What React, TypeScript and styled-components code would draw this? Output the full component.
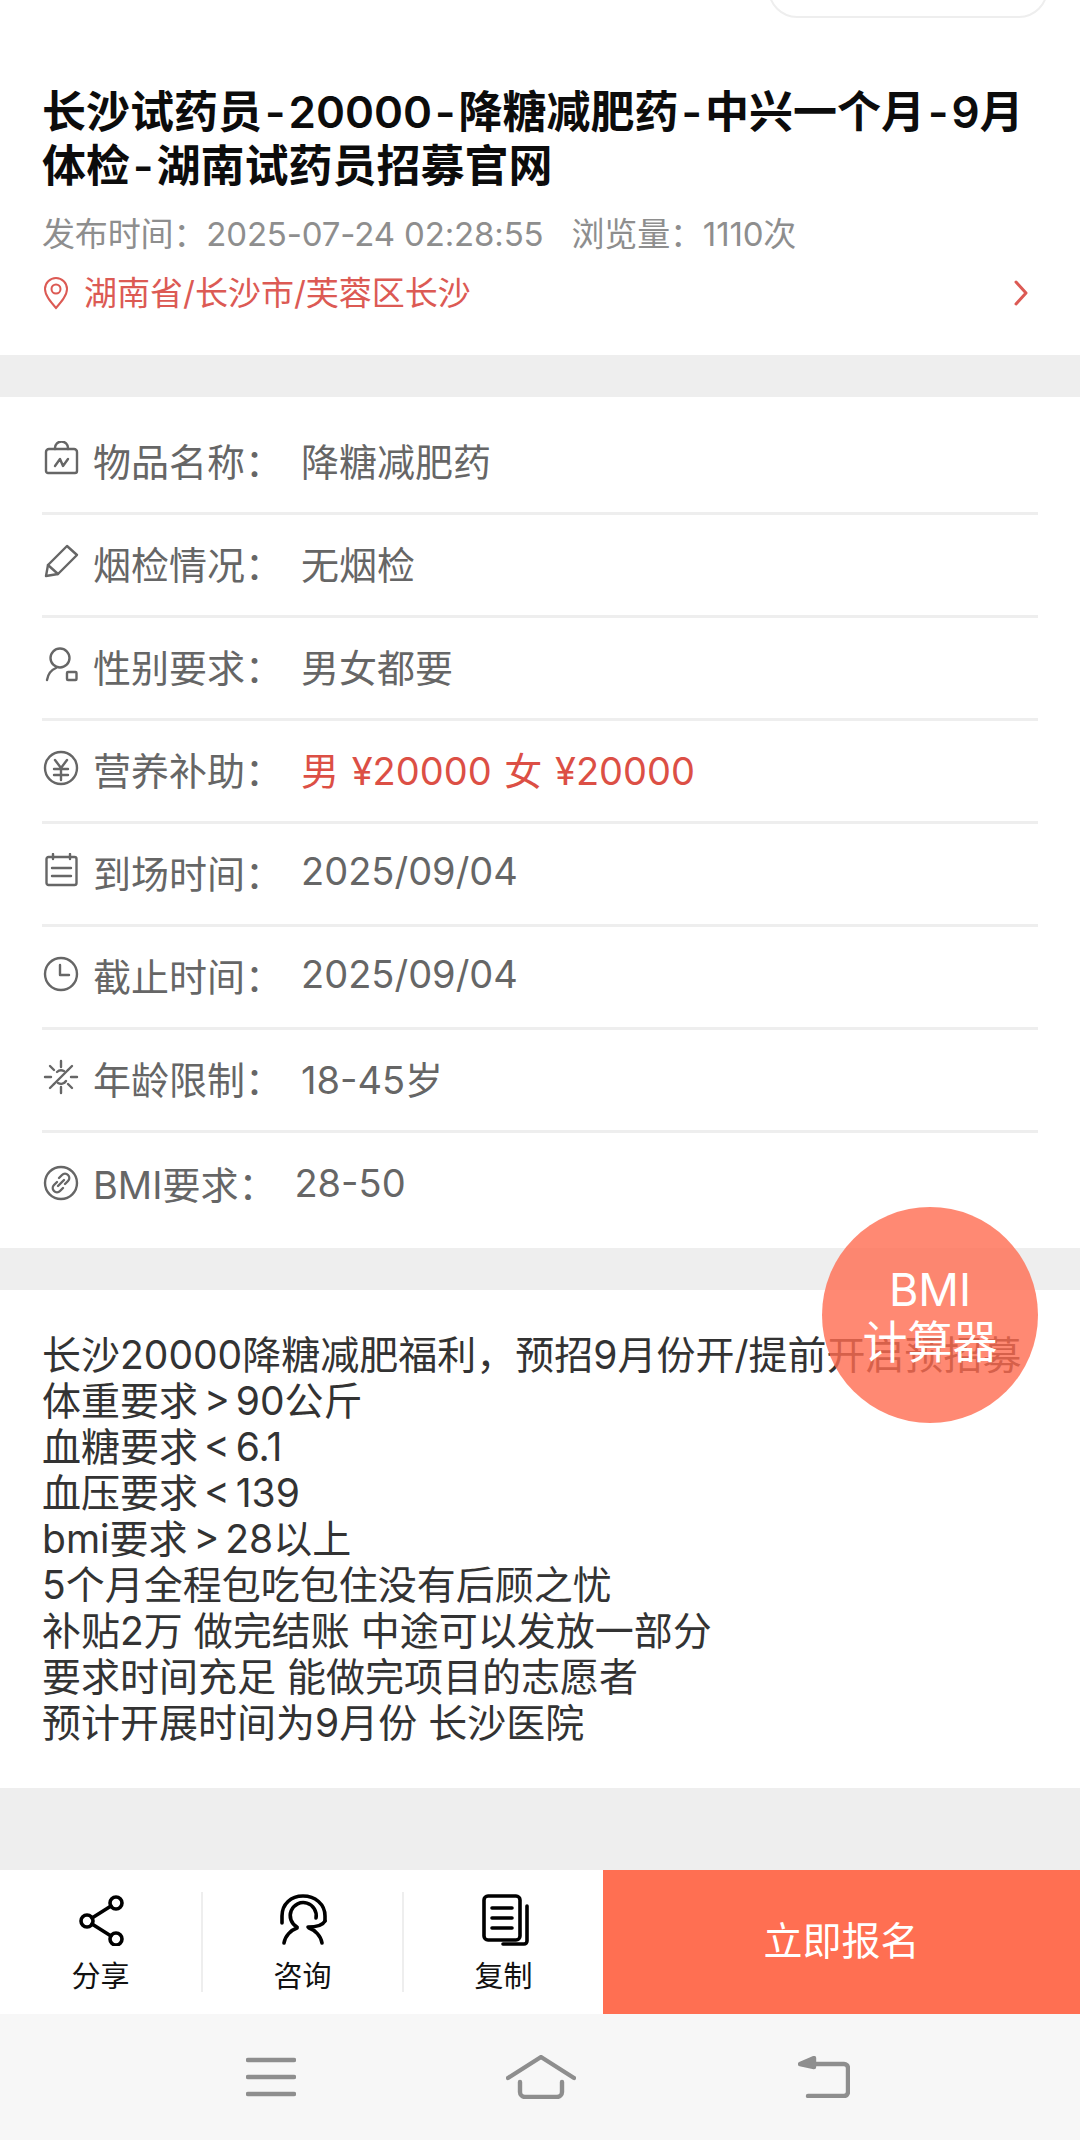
import styled, { createGlobalStyle } from "styled-components"
import { Fragment, ReactNode } from "react"

const GlobalStyle = createGlobalStyle`
  html, body {
    margin: 0;
    padding: 0;
    background: #eeeeee;
  }
  * {
    box-sizing: border-box;
  }
`

const Page = styled.div`
  position: relative;
  width: 1080px;
  height: 2140px;
  overflow: hidden;
  display: flex;
  flex-direction: column;
  background: #eeeeee;
  font-family: Inter, "Noto Sans CJK SC", sans-serif;
`
const TopPill = styled.div`
  position: absolute;
  top: -40px;
  left: 768px;
  width: 280px;
  height: 58px;
  background: #fff;
  border: 2px solid #eeeeee;
  border-radius: 40px;
`
const Header = styled.header`
  height: 355px;
  padding: 85px 42px 0;
  background: #fff;
`
const Title = styled.h1`
  margin: 0;
  font-size: 44px;
  line-height: 54px;
  font-weight: 600;
  color: #0c0c0c;
`
const Dash = styled.span`
  margin: 0 3px;
`
const Meta = styled.div`
  display: flex;
  gap: 28px;
  margin-top: 21px;
  font-size: 33px;
  line-height: 40px;
  letter-spacing: -0.15px;
  color: #8e8e8e;
`
const Location = styled.div`
  display: flex;
  align-items: center;
  justify-content: space-between;
  margin-top: 19px;
  padding-right: 8px;
  font-size: 33px;
  line-height: 40px;
  color: #dc5a54;
`
const Place = styled.div`
  display: flex;
  align-items: center;
  gap: 14px;
`
const Details = styled.section`
  margin-top: 42px;
  height: 851px;
  padding: 15px 42px 0;
  background: #fff;
`
const Row = styled.div`
  display: flex;
  align-items: center;
  height: 103px;
  padding-bottom: 6px;
  border-bottom: 3px solid #eeeeee;
  font-size: 38px;
  color: #666;
  &:last-child {
    padding-bottom: 4px;
    border-bottom: none;
  }
`
const RowIcon = styled.svg`
  flex: none;
  width: 36px;
  height: 36px;
  margin: 0 14px 0 1px;
  fill: none;
  stroke: #666;
  stroke-width: 2.4;
  stroke-linecap: round;
  stroke-linejoin: round;
`
const Label = styled.span`
  margin-right: 18px;
`
const Value = styled.span<{ $red?: boolean }>`
  color: ${(p) => (p.$red ? "#dc4f45" : "#666")};
  word-spacing: ${(p) => (p.$red ? "2px" : "0")};
`
const Body = styled.section`
  margin-top: 42px;
  height: 498px;
  padding: 42px 42px 0;
  background: #fff;
  font-size: 39px;
  line-height: 46px;
  color: #333;
  white-space: pre;
`
const BodyLine = styled.div<{ $tight?: boolean }>`
  word-spacing: ${(p) => (p.$tight ? "-5px" : "0")};
`
const Bmi = styled.div`
  position: absolute;
  left: 822px;
  top: 1207px;
  width: 216px;
  height: 216px;
  padding-top: 56px;
  border-radius: 50%;
  background: rgba(255, 107, 80, 0.8);
  color: #fff;
  font-size: 45px;
  line-height: 53px;
  text-align: center;
`
const ActionBar = styled.footer`
  display: flex;
  align-items: center;
  margin-top: 82px;
  height: 144px;
  background: #fff;
`
const Tool = styled.div`
  display: flex;
  flex-direction: column;
  align-items: center;
  width: 201px;
  height: 100px;
  font-size: 29px;
  line-height: 36px;
  color: #111;
  & + & {
    border-left: 2px solid #eeeeee;
  }
`
const ToolIcon = styled.svg`
  flex: none;
  width: 52px;
  height: 52px;
  margin-top: 2px;
  fill: none;
  stroke: #000;
  stroke-width: 3.6;
  stroke-linecap: round;
  stroke-linejoin: round;
`
const ToolLabel = styled.span`
  flex: none;
  margin-top: 13px;
`
const SignUp = styled.button`
  flex: 1;
  align-self: stretch;
  border: none;
  padding: 0 0 8px;
  background: #ff6f52;
  color: #fff;
  font-family: inherit;
  font-size: 39px;
`
const SystemNav = styled.nav`
  display: flex;
  align-items: center;
  flex: 1;
  gap: 210px;
  padding-left: 246px;
  background: #f7f7f7;
`
const NavIcon = styled.svg<{ $shift?: number }>`
  margin-left: ${(p) => p.$shift ?? 0}px;
  fill: none;
  stroke: #8e8e8e;
  stroke-width: 4.4;
  stroke-linecap: round;
  stroke-linejoin: round;
`

const ICONS: Record<string, ReactNode> = {
  bag: (
    <>
      <path d="M6 8h25a3 3 0 0 1 3 3v19a2 2 0 0 1-2 2H5a2 2 0 0 1-2-2V11a3 3 0 0 1 3-3z" />
      <path d="M12 8V7a6.5 6.5 0 0 1 13 0v1" />
      <path d="M12 25l5-7 3 7 5-7" />
    </>
  ),
  pen: (
    <>
      <path d="M3 32l2-11L24 2l10 9-19 19z" />
      <path d="M5 21l10 9" />
    </>
  ),
  user: (
    <>
      <circle cx="17" cy="11" r="9.5" />
      <path d="M4 33c1-6 4-10 9-12" />
      <rect x="24" y="25" width="9.5" height="8" rx="1" />
    </>
  ),
  yen: (
    <>
      <circle cx="18" cy="18" r="16" />
      <path d="M12 10l6 8 6-8M11 19h14M11 25h14M18 18v12" />
    </>
  ),
  calendar: (
    <>
      <rect x="3.5" y="4" width="30" height="28" rx="2" />
      <path d="M10 1v5M27 1v5M9 15h19M9 23h19" />
    </>
  ),
  clock: (
    <>
      <circle cx="18" cy="18" r="16" />
      <path d="M17 9v10h9" />
    </>
  ),
  sun: (
    <>
      <path d="M18 2v6M18 28v6M2 18h6M28 18h6M7 7l4 4M25 25l4 4M29 7l-4 4M7 29l4-4" />
      <path d="M11 25L25 11" />
      <path d="M14 13a6 6 0 0 1 7-1M23 22a6 6 0 0 1-8 2" />
    </>
  ),
  link: (
    <>
      <circle cx="18" cy="18" r="16" />
      <path d="M16 13l3-3a4 4 0 0 1 6 6l-3 3M20 23l-3 3a4 4 0 0 1-6-6l3-3M15 21l6-6" />
    </>
  ),
}

const ROWS = [
  { icon: "bag", label: "物品名称：", value: "降糖减肥药" },
  { icon: "pen", label: "烟检情况：", value: "无烟检" },
  { icon: "user", label: "性别要求：", value: "男女都要" },
  { icon: "yen", label: "营养补助：", value: "男 ¥20000 女 ¥20000", red: true },
  { icon: "calendar", label: "到场时间：", value: "2025/09/04" },
  { icon: "clock", label: "截止时间：", value: "2025/09/04" },
  { icon: "sun", label: "年龄限制：", value: "18-45岁" },
  { icon: "link", label: "BMI要求：", value: "28-50" },
]

const BODY_LINES = [
  { text: "长沙20000降糖减肥福利，预招9月份开/提前开启预招募" },
  { text: "体重要求 > 90公斤", tight: true },
  { text: "血糖要求 < 6.1", tight: true },
  { text: "血压要求 < 139", tight: true },
  { text: "bmi要求 > 28以上", tight: true },
  { text: "5个月全程包吃包住没有后顾之忧" },
  { text: "补贴2万 做完结账 中途可以发放一部分" },
  { text: "要求时间充足 能做完项目的志愿者" },
  { text: "预计开展时间为9月份 长沙医院" },
]

const TITLE = "长沙试药员-20000-降糖减肥药-中兴一个月-9月体检-湖南试药员招募官网"

export default function App() {
  return (
    <Page>
      <GlobalStyle />
      <TopPill />
      <Header>
        <Title>
          {TITLE.split("-").map((part, i) => (
            <Fragment key={part}>
              {i > 0 && <Dash>-</Dash>}
              {part}
            </Fragment>
          ))}
        </Title>
        <Meta>
          <span>发布时间：2025-07-24 02:28:55</span>
          <span>浏览量：1110次</span>
        </Meta>
        <Location>
          <Place>
            <svg width="28" height="34" viewBox="0 0 28 34" fill="none" stroke="#dc5a54" strokeWidth="2">
              <path d="M14 32C8 25 3 19 3 13a11 11 0 0 1 22 0c0 6-5 12-11 19z" />
              <circle cx="14" cy="13" r="4.5" />
            </svg>
            <span>湖南省/长沙市/芙蓉区长沙</span>
          </Place>
          <svg width="18" height="28" viewBox="0 0 18 28" fill="none" stroke="#dc5a54" strokeWidth="3" strokeLinecap="round" strokeLinejoin="round">
            <path d="M4 3l10 11L4 25" />
          </svg>
        </Location>
      </Header>

      <Details>
        {ROWS.map((row) => (
          <Row key={row.label}>
            <RowIcon viewBox="0 0 36 36">{ICONS[row.icon]}</RowIcon>
            <Label>{row.label}</Label>
            <Value $red={row.red}>{row.value}</Value>
          </Row>
        ))}
      </Details>

      <Body>
        {BODY_LINES.map((line) => (
          <BodyLine key={line.text} $tight={line.tight}>
            {line.text}
          </BodyLine>
        ))}
      </Body>

      <Bmi>
        BMI
        <br />
        计算器
      </Bmi>

      <ActionBar>
        <Tool>
          <ToolIcon viewBox="0 0 52 52">
            <circle cx="41" cy="9" r="6" />
            <circle cx="12" cy="27" r="6" />
            <circle cx="41" cy="45" r="6" />
            <path d="M17 24L36 12M17 30l19 12" />
          </ToolIcon>
          <ToolLabel>分享</ToolLabel>
        </Tool>
        <Tool>
          <ToolIcon viewBox="0 0 52 52">
            <path d="M20 33A13 13 0 1 1 39 24" />
            <path d="M5 29V22C5 10 14 2 26 2s22 8 22 20v5" />
            <path d="M48 27c-2 4-9 6-17 6" />
            <path d="M7 49c1-7 7-13 13-15M45 49c-1-7-7-13-13-15" />
          </ToolIcon>
          <ToolLabel>咨询</ToolLabel>
        </Tool>
        <Tool>
          <ToolIcon viewBox="0 0 52 52">
            <rect x="6" y="2" width="36" height="44" rx="4" />
            <path d="M14 14h20M14 24h20M14 34h20" />
            <path d="M49 12v35a3 3 0 0 1-3 3H25" />
          </ToolIcon>
          <ToolLabel>复制</ToolLabel>
        </Tool>
        <SignUp>立即报名</SignUp>
      </ActionBar>

      <SystemNav>
        <NavIcon width="50" height="40" viewBox="0 0 50 40">
          <path d="M2 3h46M2 20h46M2 37h46" />
        </NavIcon>
        <NavIcon width="70" height="44" viewBox="0 0 70 44">
          <path d="M2 23L35 2l33 21" />
          <path d="M14 27v10a5 5 0 0 0 5 5h32a5 5 0 0 0 5-5V27" />
        </NavIcon>
        <NavIcon $shift={12} width="52" height="42" viewBox="0 0 52 42">
          <path d="M14 8h32a4 4 0 0 1 4 4v24a4 4 0 0 1-4 4H10" />
          <path d="M2 8l14-6v9z" fill="#8e8e8e" />
        </NavIcon>
      </SystemNav>
    </Page>
  )
}
